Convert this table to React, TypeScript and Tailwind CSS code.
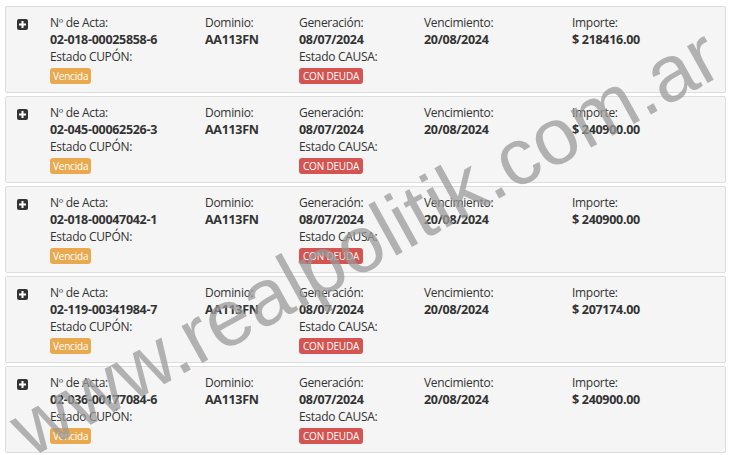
import React from "react";

type Row = { acta: string; importe: string };
const rows: Row[] = [
  { acta: "02-018-00025858-6", importe: "$ 218416.00" },
  { acta: "02-045-00062526-3", importe: "$ 240900.00" },
  { acta: "02-018-00047042-1", importe: "$ 240900.00" },
  { acta: "02-119-00341984-7", importe: "$ 207174.00" },
  { acta: "02-036-00177084-6", importe: "$ 240900.00" },
];

function PlusIcon() {
  return (
    <svg width="11" height="11" viewBox="0 0 11 11">
      <rect x="0" y="0" width="11" height="11" rx="2" fill="#333" />
      <rect x="4.5" y="2" width="2" height="7" fill="#fff" />
      <rect x="2" y="4.5" width="7" height="2" fill="#fff" />
    </svg>
  );
}

function Label({ children }: { children: React.ReactNode }) {
  return <div className="text-[12px] tracking-[-0.3px]">{children}</div>;
}
function Value({ children }: { children: React.ReactNode }) {
  return <div className="font-bold text-[12.5px] tracking-[-0.3px]">{children}</div>;
}

function Card({ r }: { r: Row }) {
  return (
    <div className="h-[87px] bg-[#f5f5f5] border border-[#dddddd] rounded-[2px] flex text-[#333] leading-[17px]">
      <div className="w-[44px] pl-[11px] pt-[12px]">
        <PlusIcon />
      </div>
      <div className="w-[155px] pt-[7px]">
        <Label>Nº de Acta:</Label>
        <Value>{r.acta}</Value>
        <Label>Estado CUPÓN:</Label>
        <div className="mt-[3px] inline-block bg-[#e8a94f] text-white text-[10px] tracking-[-0.2px] leading-[16px] px-[3px] rounded-[3px]">Vencida</div>
      </div>
      <div className="w-[94px] pt-[7px]">
        <Label>Dominio:</Label>
        <Value>AA113FN</Value>
      </div>
      <div className="w-[125px] pt-[7px]">
        <Label>Generación:</Label>
        <Value>08/07/2024</Value>
        <Label>Estado CAUSA:</Label>
        <div className="mt-[3px] inline-block bg-[#d35450] text-white text-[10px] tracking-[-0.2px] leading-[16px] px-[4px] rounded-[3px]">CON DEUDA</div>
      </div>
      <div className="w-[148px] pt-[7px]">
        <Label>Vencimiento:</Label>
        <Value>20/08/2024</Value>
      </div>
      <div className="pt-[7px]">
        <Label>Importe:</Label>
        <Value>{r.importe}</Value>
      </div>
    </div>
  );
}

export default function App() {
  return (
    <div
      className="relative w-[730px] h-[455px] bg-white overflow-hidden"
      style={{ fontFamily: '"Open Sans", "Noto Sans", sans-serif' }}
    >
      <div className="flex flex-col gap-[3px] pl-[5px] pr-[4px] pt-[6px]">
        {rows.map((r, i) => (
          <Card key={i} r={r} />
        ))}
      </div>
      <div className="pointer-events-none absolute left-[365px] top-[242px] w-0 h-0">
        <div
          className="absolute -translate-x-1/2 -translate-y-1/2 -rotate-[29deg] whitespace-nowrap text-[80px] leading-none text-[#999999]/75"
          style={{ fontFamily: '"Liberation Sans", Arial, sans-serif' }}
        >
          www.realpolitik.com.ar
        </div>
      </div>
    </div>
  );
}
